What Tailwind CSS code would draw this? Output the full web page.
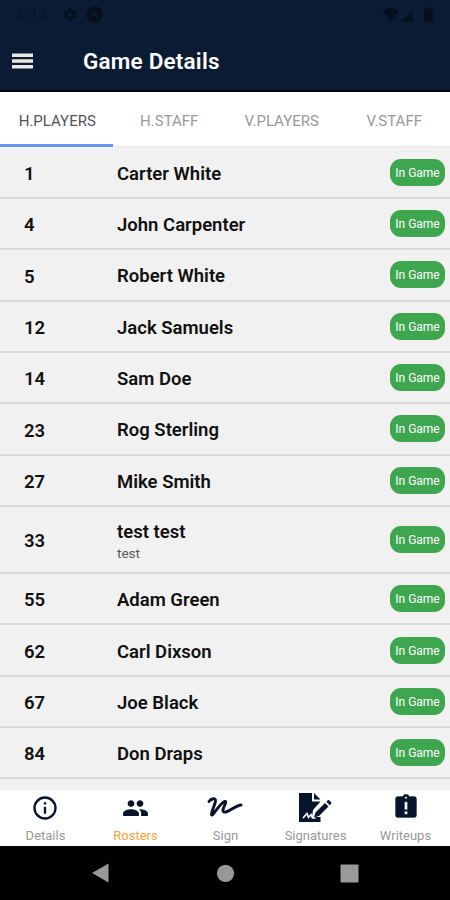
<!DOCTYPE html>
<html lang="en">
<head>
<meta charset="utf-8">
<title>Game Details</title>
<script src="https://cdn.jsdelivr.net/npm/@tailwindcss/browser@4"></script>
</head>
<body class="w-[450px] h-[900px] overflow-hidden flex flex-col bg-[#f1f1f1] font-['Roboto',sans-serif]">
<header class="h-[92px] shrink-0 bg-[#0b1b33] border-b-2 border-[#02030f] flex flex-col">
  <div class="h-[30px] flex items-center pl-[17px] pr-[15px] text-[#050f1e]">
    <span class="w-[45px] text-[16px] leading-none text-[#07142a]">6:13</span>
    <svg class="w-[15px] h-[15px]" viewBox="2 2 20 20" fill="currentColor"><path d="M19.4 13a7.500 7.500 0 0 0 0-2l2.100-1.600-2-3.500-2.500 1a7.500 7.500 0 0 0-1.700-1L15 3.300h-4l-.4 2.600a7.500 7.500 0 0 0-1.700 1l-2.500-1-2 3.500L6.500 11a7.500 7.500 0 0 0 0 2l-2.100 1.600 2 3.500 2.500-1a7.500 7.500 0 0 0 1.700 1l.4 2.600h4l.4-2.600a7.500 7.500 0 0 0 1.700-1l2.500 1 2-3.500zM13 15.500a3.500 3.500 0 1 1 0-7 3.500 3.500 0 0 1 0 7z"/></svg>
    <svg class="w-[17px] h-[17px] ml-[9px]" viewBox="0 0 17 17"><circle cx="8.500" cy="8.500" r="8.200" fill="currentColor"/><path d="M5 12l3.500-7.500L12 12M6.500 9.500h4" fill="none" stroke="#0b1b33" stroke-width="1.100"/></svg>
    <svg class="w-[54px] h-[18px] ml-auto" viewBox="0 0 54 18" fill="currentColor"><path d="M1 4.500Q9-.5 18 4.500L9.500 15z"/><path d="M20 16L32 4v12z" opacity=".7"/><path d="M20 16l7-7v7z"/><path d="M45 3q0-1.500 1.500-1.500h2Q50 1.500 50 3q2 0 2 2v9q0 2-2 2h-5q-2 0-2-2V5q0-2 2-2z"/></svg>
  </div>
  <div class="h-[62px] flex items-center pt-[2px]">
    <svg class="w-[21px] h-[16px] ml-[12px]" viewBox="0 0 21 16" fill="#e9e9e4"><path d="M0 .5h21v3.500H0zM0 6.300h21v3.500H0zM0 12.100h21v3.500H0z"/></svg>
    <h1 class="ml-[50px] text-[22.500px] font-semibold text-white leading-none tracking-[0.200px] pt-[2px]">Game Details</h1>
  </div>
</header>
<nav class="h-[55px] shrink-0 grid grid-cols-4 bg-white text-[15px] text-[#999] border-b border-[#e9e9e9] text-center leading-[59px]">
  <span class="h-[55px] border-b-3 border-[#6495ed] text-[#555] pl-[2px]">H.PLAYERS</span>
  <span class="pl-[1px]">H.STAFF</span>
  <span class="pl-[1px]">V.PLAYERS</span>
  <span class="pl-[1px]">V.STAFF</span>
</nav>
<main id="list" class="h-[643px] shrink-0 overflow-hidden pt-[0.600px]"></main>
<template id="row">
  <div class="flex items-center border-b-2 border-[#d9d9d9] pr-[5px] pl-[24px] text-[18.500px] font-semibold text-[#111]">
    <span class="n w-[93px] leading-none pt-[4px]"></span>
    <div class="flex-1 pt-[4px]"><div class="name leading-[21px]"></div><div class="sub text-[13.500px] leading-[20px] font-normal text-[#555]"></div></div>
    <span class="w-[55px] h-[27px] rounded-[11px] bg-[#3fa650] text-white text-[12px] font-normal leading-[29px] text-center">In Game</span>
  </div>
</template>
<footer class="h-[56px] shrink-0 grid grid-cols-5 bg-white text-[13px] text-[#999] text-center">
  <div class="flex flex-col items-center"><svg class="w-[28px] h-[28px] mt-[4px]" viewBox="0 0 24 24" fill="#07142c"><path d="M11 7h2v2h-2zm0 4h2v6h-2zm1-9a10 10 0 1 0 0 20 10 10 0 0 0 0-20zm0 18a8 8 0 1 1 0-16 8 8 0 0 1 0 16z"/></svg><span class="leading-[28px] pl-[1px]">Details</span></div>
  <div class="flex flex-col items-center text-[#ff9f38]"><svg class="w-[27px] h-[28px] mt-[4px] ml-[1px]" viewBox="0 0 24 24" fill="#07142c"><path d="M16 11c1.660 0 2.990-1.340 2.990-3S17.660 5 16 5s-3 1.340-3 3 1.340 3 3 3zm-8 0c1.660 0 2.990-1.340 2.990-3S9.660 5 8 5 5 6.340 5 8s1.340 3 3 3zm0 2c-2.330 0-7 1.170-7 3.500V19h14v-2.500c0-2.330-4.670-3.500-7-3.500zm8 0c-.29 0-.62.020-.97.050 1.160.84 1.970 1.970 1.970 3.450V19h6v-2.500c0-2.330-4.670-3.500-7-3.500z"/></svg><span class="leading-[28px] pl-[1px]">Rosters</span></div>
  <div class="flex flex-col items-center"><svg class="w-[38px] h-[28px] mt-[4px]" viewBox="0 0 38 28" fill="none" stroke="#07142c" stroke-width="2.900" stroke-linecap="round" stroke-linejoin="round"><path d="M3 7.500C5 4.500 10 3.500 9.500 7C9 11 5.500 17 5.500 20.500C6 24 13 10 18.500 7.500C23 6 14 17 18 18C22 19 27 12.500 35 11"/></svg><span class="leading-[28px] pl-[1px]">Sign</span></div>
  <div class="flex flex-col items-center"><svg class="w-[34px] h-[30px] mt-[2px]" viewBox="0 0 34 30" fill="#07142c"><path d="M1 1h13v8.500h8.500L15 18l-1 7h8.500v5H1z"/><path d="M16 1l6.500 6.500H16z"/><path d="M16 25.500l1.500-5L27 11l3.500 3.500L21 24z"/><path d="M28.300 9.700l1.200-1.200q1-1 2 0l1.500 1.500q1 1 0 2l-1.200 1.200z"/><path d="M5 26l4-4.500 1.500 4 2.500-3 1.500 3.500h3" fill="none" stroke="#fff" stroke-width="1.600"/></svg><span class="leading-[28px] pl-[1px]">Signatures</span></div>
  <div class="flex flex-col items-center"><svg class="w-[28px] h-[28px] mt-[3px] mb-[1px] ml-[2px]" viewBox="0 0 24 24" fill="#07142c" stroke="#07142c" stroke-width=".3"><path d="M19 3h-4.180a3 3 0 0 0-5.640 0H5a2 2 0 0 0-2 2v14c0 1.100.9 2 2 2h14a2 2 0 0 0 2-2V5a2 2 0 0 0-2-2zm-5.700 15.300h-2.600v-2.600h2.600zm0-4h-2.600V7.500h2.600zM12 5a1 1 0 1 1 0-2 1 1 0 0 1 0 2z"/></svg><span class="leading-[28px] pl-[1px]">Writeups</span></div>
</footer>
<div class="h-[54px] shrink-0 bg-black">
  <svg class="w-[450px] h-[54px]" viewBox="0 0 450 54" fill="#999"><path d="M92 27l16.500-9.500v19z"/><circle cx="225.500" cy="27.300" r="8.600"/><rect x="340.500" y="18.500" width="18" height="18" rx="1"/></svg>
</div>
<script>
const players = [[1,'Carter White'],[4,'John Carpenter'],[5,'Robert White'],[12,'Jack Samuels'],[14,'Sam Doe'],[23,'Rog Sterling'],[27,'Mike Smith'],[33,'test test','test'],[55,'Adam Green'],[62,'Carl Dixson'],[67,'Joe Black'],[84,'Don Draps']];
const list = document.getElementById('list');
for (const [n, name, sub] of players) {
  const row = document.getElementById('row').content.cloneNode(true).firstElementChild;
  row.style.height = (sub ? 67 : 51.350) + 'px';
  row.querySelector('.n').textContent = n;
  row.querySelector('.name').textContent = name;
  row.querySelector('.sub').textContent = sub || '';
  if (sub) row.querySelector('.name').parentElement.classList.add('mt-[2px]');
  list.append(row);
}
</script>
</body>
</html>
